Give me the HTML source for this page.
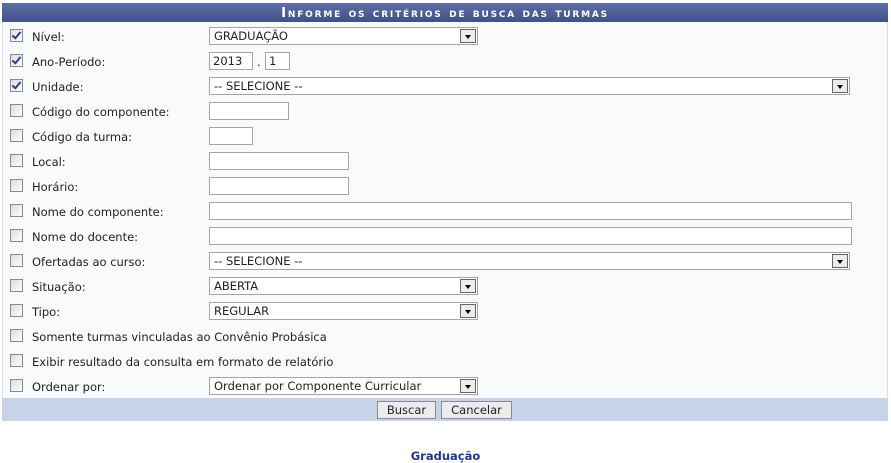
<!DOCTYPE html>
<html><head><meta charset="utf-8"><style>
body{margin:0;width:891px;height:462px;background:#fff;font-family:Verdana,"DejaVu Sans","Liberation Sans",sans-serif;font-size:11.5px;color:#222;position:relative;overflow:hidden}
.abs{position:absolute}
#hdr{left:2px;top:3px;width:886px;height:19px;background:linear-gradient(#5d6fa5,#3f5189);color:#fff;font-weight:bold;text-align:center;line-height:20px;font-size:13.5px;font-variant:small-caps;letter-spacing:1.8px}
#frm{left:2px;top:22px;width:884px;height:376px;background:#f9fafc;border-left:1px solid #e2e4ea;border-right:1px solid #dcdde2}
#ftr{left:2px;top:398px;width:886px;height:23px;background:#c8d3ea}
.cb{position:absolute;left:10px;width:11px;height:11px;border:1px solid #8a8a8a;background:linear-gradient(135deg,#dcdcdc,#fff)}
.cb.on::after{content:"";position:absolute;left:3px;top:0px;width:3px;height:7px;border:solid #2a3fa0;border-width:0 2px 2px 0;transform:rotate(40deg)}
.lb{position:absolute;left:32px;margin-top:1px}
.in{position:absolute;border:1px solid #a5a5a5;background:#fff;box-sizing:border-box;height:18px;padding-left:3px;line-height:17px}
.sel{position:absolute;height:18px;border:1px solid #a5a5a5;background:#fff;box-sizing:border-box;padding-left:4px;line-height:17px}
.sel::after{content:"";position:absolute;right:1px;top:1px;width:14px;height:12px;border:1px solid #666;background:#ececec}
.sel::before{content:"";position:absolute;right:6px;top:7px;border:3px solid transparent;border-top:4px solid #000;z-index:2}
.btn{position:absolute;top:401px;height:18px;border:1px solid #8a8a8a;background:#ececec;box-sizing:border-box;text-align:center;line-height:17px}
</style></head><body>
<div class="abs" id="hdr">Informe os critérios de busca das turmas</div>
<div class="abs" id="frm"></div>
<div class="abs" id="ftr"></div>

<div class="cb on" style="top:29px"></div><div class="lb" style="top:29px">Nível:</div>
<div class="sel" style="left:209px;top:27px;width:269px">GRADUAÇÃO</div>

<div class="cb on" style="top:54px"></div><div class="lb" style="top:54px">Ano-Período:</div>
<div class="in" style="left:209px;top:52px;width:44px">2013</div>
<div class="abs" style="left:257px;top:55px">.</div>
<div class="in" style="left:265px;top:52px;width:25px">1</div>

<div class="cb on" style="top:79px"></div><div class="lb" style="top:79px">Unidade:</div>
<div class="sel" style="left:209px;top:77px;width:641px">-- SELECIONE --</div>

<div class="cb" style="top:104px"></div><div class="lb" style="top:104px">Código do componente:</div>
<div class="in" style="left:209px;top:102px;width:80px"></div>

<div class="cb" style="top:129px"></div><div class="lb" style="top:129px">Código da turma:</div>
<div class="in" style="left:209px;top:127px;width:44px"></div>

<div class="cb" style="top:154px"></div><div class="lb" style="top:154px">Local:</div>
<div class="in" style="left:209px;top:152px;width:140px"></div>

<div class="cb" style="top:179px"></div><div class="lb" style="top:179px">Horário:</div>
<div class="in" style="left:209px;top:177px;width:140px"></div>

<div class="cb" style="top:204px"></div><div class="lb" style="top:204px">Nome do componente:</div>
<div class="in" style="left:209px;top:202px;width:643px"></div>

<div class="cb" style="top:229px"></div><div class="lb" style="top:229px">Nome do docente:</div>
<div class="in" style="left:209px;top:227px;width:643px"></div>

<div class="cb" style="top:254px"></div><div class="lb" style="top:254px">Ofertadas ao curso:</div>
<div class="sel" style="left:209px;top:252px;width:641px">-- SELECIONE --</div>

<div class="cb" style="top:279px"></div><div class="lb" style="top:279px">Situação:</div>
<div class="sel" style="left:209px;top:277px;width:269px">ABERTA</div>

<div class="cb" style="top:304px"></div><div class="lb" style="top:304px">Tipo:</div>
<div class="sel" style="left:209px;top:302px;width:269px">REGULAR</div>

<div class="cb" style="top:329px"></div><div class="lb" style="top:329px">Somente turmas vinculadas ao Convênio Probásica</div>
<div class="cb" style="top:354px"></div><div class="lb" style="top:354px">Exibir resultado da consulta em formato de relatório</div>

<div class="cb" style="top:379px"></div><div class="lb" style="top:379px">Ordenar por:</div>
<div class="sel" style="left:209px;top:377px;width:269px">Ordenar por Componente Curricular</div>

<div class="btn" style="left:377px;width:59px">Buscar</div>
<div class="btn" style="left:441px;width:71px">Cancelar</div>

<div class="abs" style="left:0;width:891px;top:449px;text-align:center;color:#1f3a88;font-weight:bold">Graduação</div>
</body></html>
